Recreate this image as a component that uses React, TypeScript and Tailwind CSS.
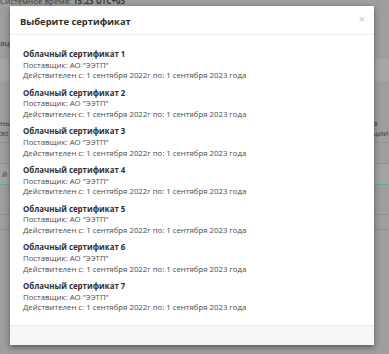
import React from "react";

const certs = [1, 2, 3, 4, 5, 6, 7];

function Backdrop() {
  return (
    <div className="absolute inset-0 bg-[#9e9e9e] text-[#3a3a3a] text-[8px] leading-[10px]">
      <div className="h-[40px] -mt-[4px] whitespace-nowrap">
        Системное время: <span className="font-bold">15:23 UTC+03</span>
      </div>
      <div className="h-[23px] pt-[2px] whitespace-nowrap">ациям</div>
      <div className="h-[22px] bg-[#a5a5a5]" />
      <div className="h-[37px]" />
      <div className="h-[25px] flex justify-between border-b border-[#8f8f8f]">
        <div className="w-[14px] overflow-hidden whitespace-nowrap">
          <div>ны</div>
          <div>зо</div>
        </div>
        <div className="w-[16px] overflow-hidden whitespace-nowrap">
          <div>а</div>
          <div>ции</div>
        </div>
      </div>
      <div className="h-[20px]" />
      <div className="h-[22px] flex items-center border-y border-[#5fa9a2] bg-[#a3a3a3]">
        <span className="pl-[2px]">й</span>
      </div>
      <div className="h-[30px] border-b border-[#8f8f8f]" />
      <div className="h-[15px] border-b border-[#8f8f8f]" />
    </div>
  );
}

function CertItem({ n }: { n: number }) {
  return (
    <div className="leading-[10.6px]">
      <div className="text-[7.9px] font-bold text-[#2f2f2f]">Облачный сертификат {n}</div>
      <div className="text-[7.8px] text-[#4a4a4a]">Поставщик: АО "ЭЭТП"</div>
      <div className="text-[7.8px] text-[#4a4a4a]">
        Действителен с: 1 сентября 2022г по: 1 сентября 2023 года
      </div>
    </div>
  );
}

export default function App() {
  return (
    <div
      className="relative w-[389px] h-[354px] overflow-hidden"
      style={{ fontFamily: '"Open Sans", "Noto Sans", sans-serif' }}
    >
      <Backdrop />
      <div className="absolute left-[10px] top-[6px] w-[364px] h-[339px] bg-white flex flex-col shadow-[0_2px_6px_rgba(0,0,0,0.45)]">
        <div className="h-[29px] flex items-center justify-between pt-[4px] pl-[10px] pr-[9px] border-b border-[#ececec]">
          <span className="text-[9.4px] font-bold text-[#2f2f2f]">Выберите сертификат</span>
          <span className="text-[11px] text-[#c4c4c4] leading-none -mt-[8px]">×</span>
        </div>
        <div className="flex-1 flex flex-col gap-[6.9px] pt-[14px] pl-[13px]">
          {certs.map((n) => (
            <CertItem key={n} n={n} />
          ))}
        </div>
        <div className="h-[20px] bg-[#f5f6f8] border-t border-[#ebebeb]" />
      </div>
    </div>
  );
}
